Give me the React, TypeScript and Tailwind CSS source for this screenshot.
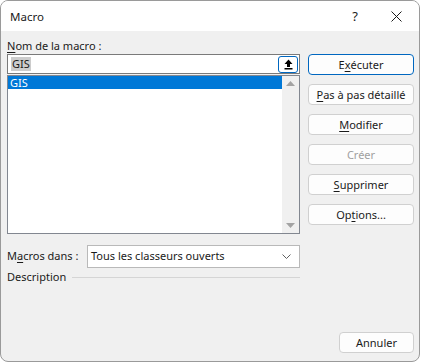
import type { ReactNode } from "react";

const font = { fontFamily: '"Noto Sans", "Segoe UI", sans-serif' };

type BtnProps = {
  children: ReactNode;
  primary?: boolean;
  disabled?: boolean;
  className?: string;
};

function DlgButton({ children, primary, disabled, className }: BtnProps) {
  return (
    <button
      type="button"
      className={
        "flex h-[21px] items-center justify-center rounded-[4px] border bg-[#fdfdfd] text-[11px] leading-none " +
        (primary ? "border-[#0067c0] " : "border-[#d0d0d0] ") +
        (disabled ? "text-[#a0a0a0] " : "text-[#1a1a1a] ") +
        (className ?? "w-full")
      }
    >
      {children}
    </button>
  );
}

function U({ children }: { children: ReactNode }) {
  return <span className="underline underline-offset-2">{children}</span>;
}

export default function App() {
  return (
    <div className="h-[363px] w-[421px] bg-white" style={font}>
      <div className="flex h-[362px] w-[420px] flex-col overflow-hidden rounded-[8px] border border-[#9a9a9a] bg-[#f0f0f0] text-[11px] text-[#1a1a1a]">
        {/* Title bar */}
        <div className="flex h-[30px] shrink-0 items-center bg-white pl-[9px] pt-[1px]">
          <span className="text-[11.5px]">Macro</span>
          <span className="ml-auto mr-[33px] text-[13px]">?</span>
          <svg width="11" height="11" viewBox="0 0 11 11" className="mr-[17px]">
            <path d="M0.5 0.5 L10.5 10.5 M10.5 0.5 L0.5 10.5" stroke="#1a1a1a" strokeWidth="1" />
          </svg>
        </div>

        {/* Body */}
        <div className="flex pl-[6px] pr-[5px] pt-[6px]">
          <div className="flex w-[293px] flex-col">
            <div className="h-[16px] pt-[1px] leading-[16px]">
              <U>N</U>om de la macro :
            </div>
            <div className="mt-[1px] flex h-[20px] items-center border border-[#7a7a7a] bg-white pl-[3px] pr-[1px]">
              <span className="bg-[#cccccc] px-[1px] leading-[14px]">GIS</span>
              <div className="ml-auto flex h-[17px] w-[20px] items-center justify-center rounded-[3px] border border-[#0067c0] bg-white">
                <svg width="9" height="11" viewBox="0 0 9 11">
                  <path d="M4.5 0.5 L8.5 5 L6 5 L6 8 L3 8 L3 5 L0.5 5 Z" fill="#000" />
                  <rect x="0.5" y="9" width="8" height="1.5" fill="#000" />
                </svg>
              </div>
            </div>
            <div className="mt-[1px] flex h-[159px] border border-[#828790] bg-white">
              <div className="flex-1">
                <div className="h-[13px] bg-[#0078d7] pl-[2px] leading-[13px] text-white">GIS</div>
              </div>
              <div className="flex w-[17px] flex-col items-center justify-between bg-[#f0f0f0] py-[5px]">
                <svg width="9" height="5" viewBox="0 0 9 5">
                  <path d="M4.5 0 L9 5 L0 5 Z" fill="#a3a3a3" />
                </svg>
                <svg width="9" height="5" viewBox="0 0 9 5">
                  <path d="M0 0 L9 0 L4.5 5 Z" fill="#a3a3a3" />
                </svg>
              </div>
            </div>
            <div className="mt-[11px] flex items-center">
              <span className="w-[80px]">
                M<U>a</U>cros dans :
              </span>
              <div className="flex h-[23px] flex-1 items-center border border-[#b9b9b9] bg-white pl-[3px] pr-[8px]">
                <span>Tous les classeurs ouverts</span>
                <svg width="9" height="5" viewBox="0 0 9 5" className="ml-auto">
                  <path d="M0.5 0.5 L4.5 4.5 L8.5 0.5" fill="none" stroke="#606060" strokeWidth="1" />
                </svg>
              </div>
            </div>
            <div className="mt-[1px] flex h-[16px] items-center">
              <span>Description</span>
              <div className="ml-[6px] h-px flex-1 bg-[#d5d5d5]" />
            </div>
          </div>

          <div className="ml-[8px] mt-[17px] flex w-[106px] flex-col gap-[9px]">
            <DlgButton primary>
              E<U>x</U>écuter
            </DlgButton>
            <DlgButton>
              <U>P</U>as à pas détaillé
            </DlgButton>
            <DlgButton>
              <U>M</U>odifier
            </DlgButton>
            <DlgButton disabled>Créer</DlgButton>
            <DlgButton>
              <U>S</U>upprimer
            </DlgButton>
            <DlgButton>
              Op<U>t</U>ions...
            </DlgButton>
          </div>
        </div>

        {/* Footer */}
        <div className="mt-auto flex justify-end pb-[8px] pr-[5px]">
          <DlgButton className="w-[75px]">Annuler</DlgButton>
        </div>
      </div>
    </div>
  );
}
